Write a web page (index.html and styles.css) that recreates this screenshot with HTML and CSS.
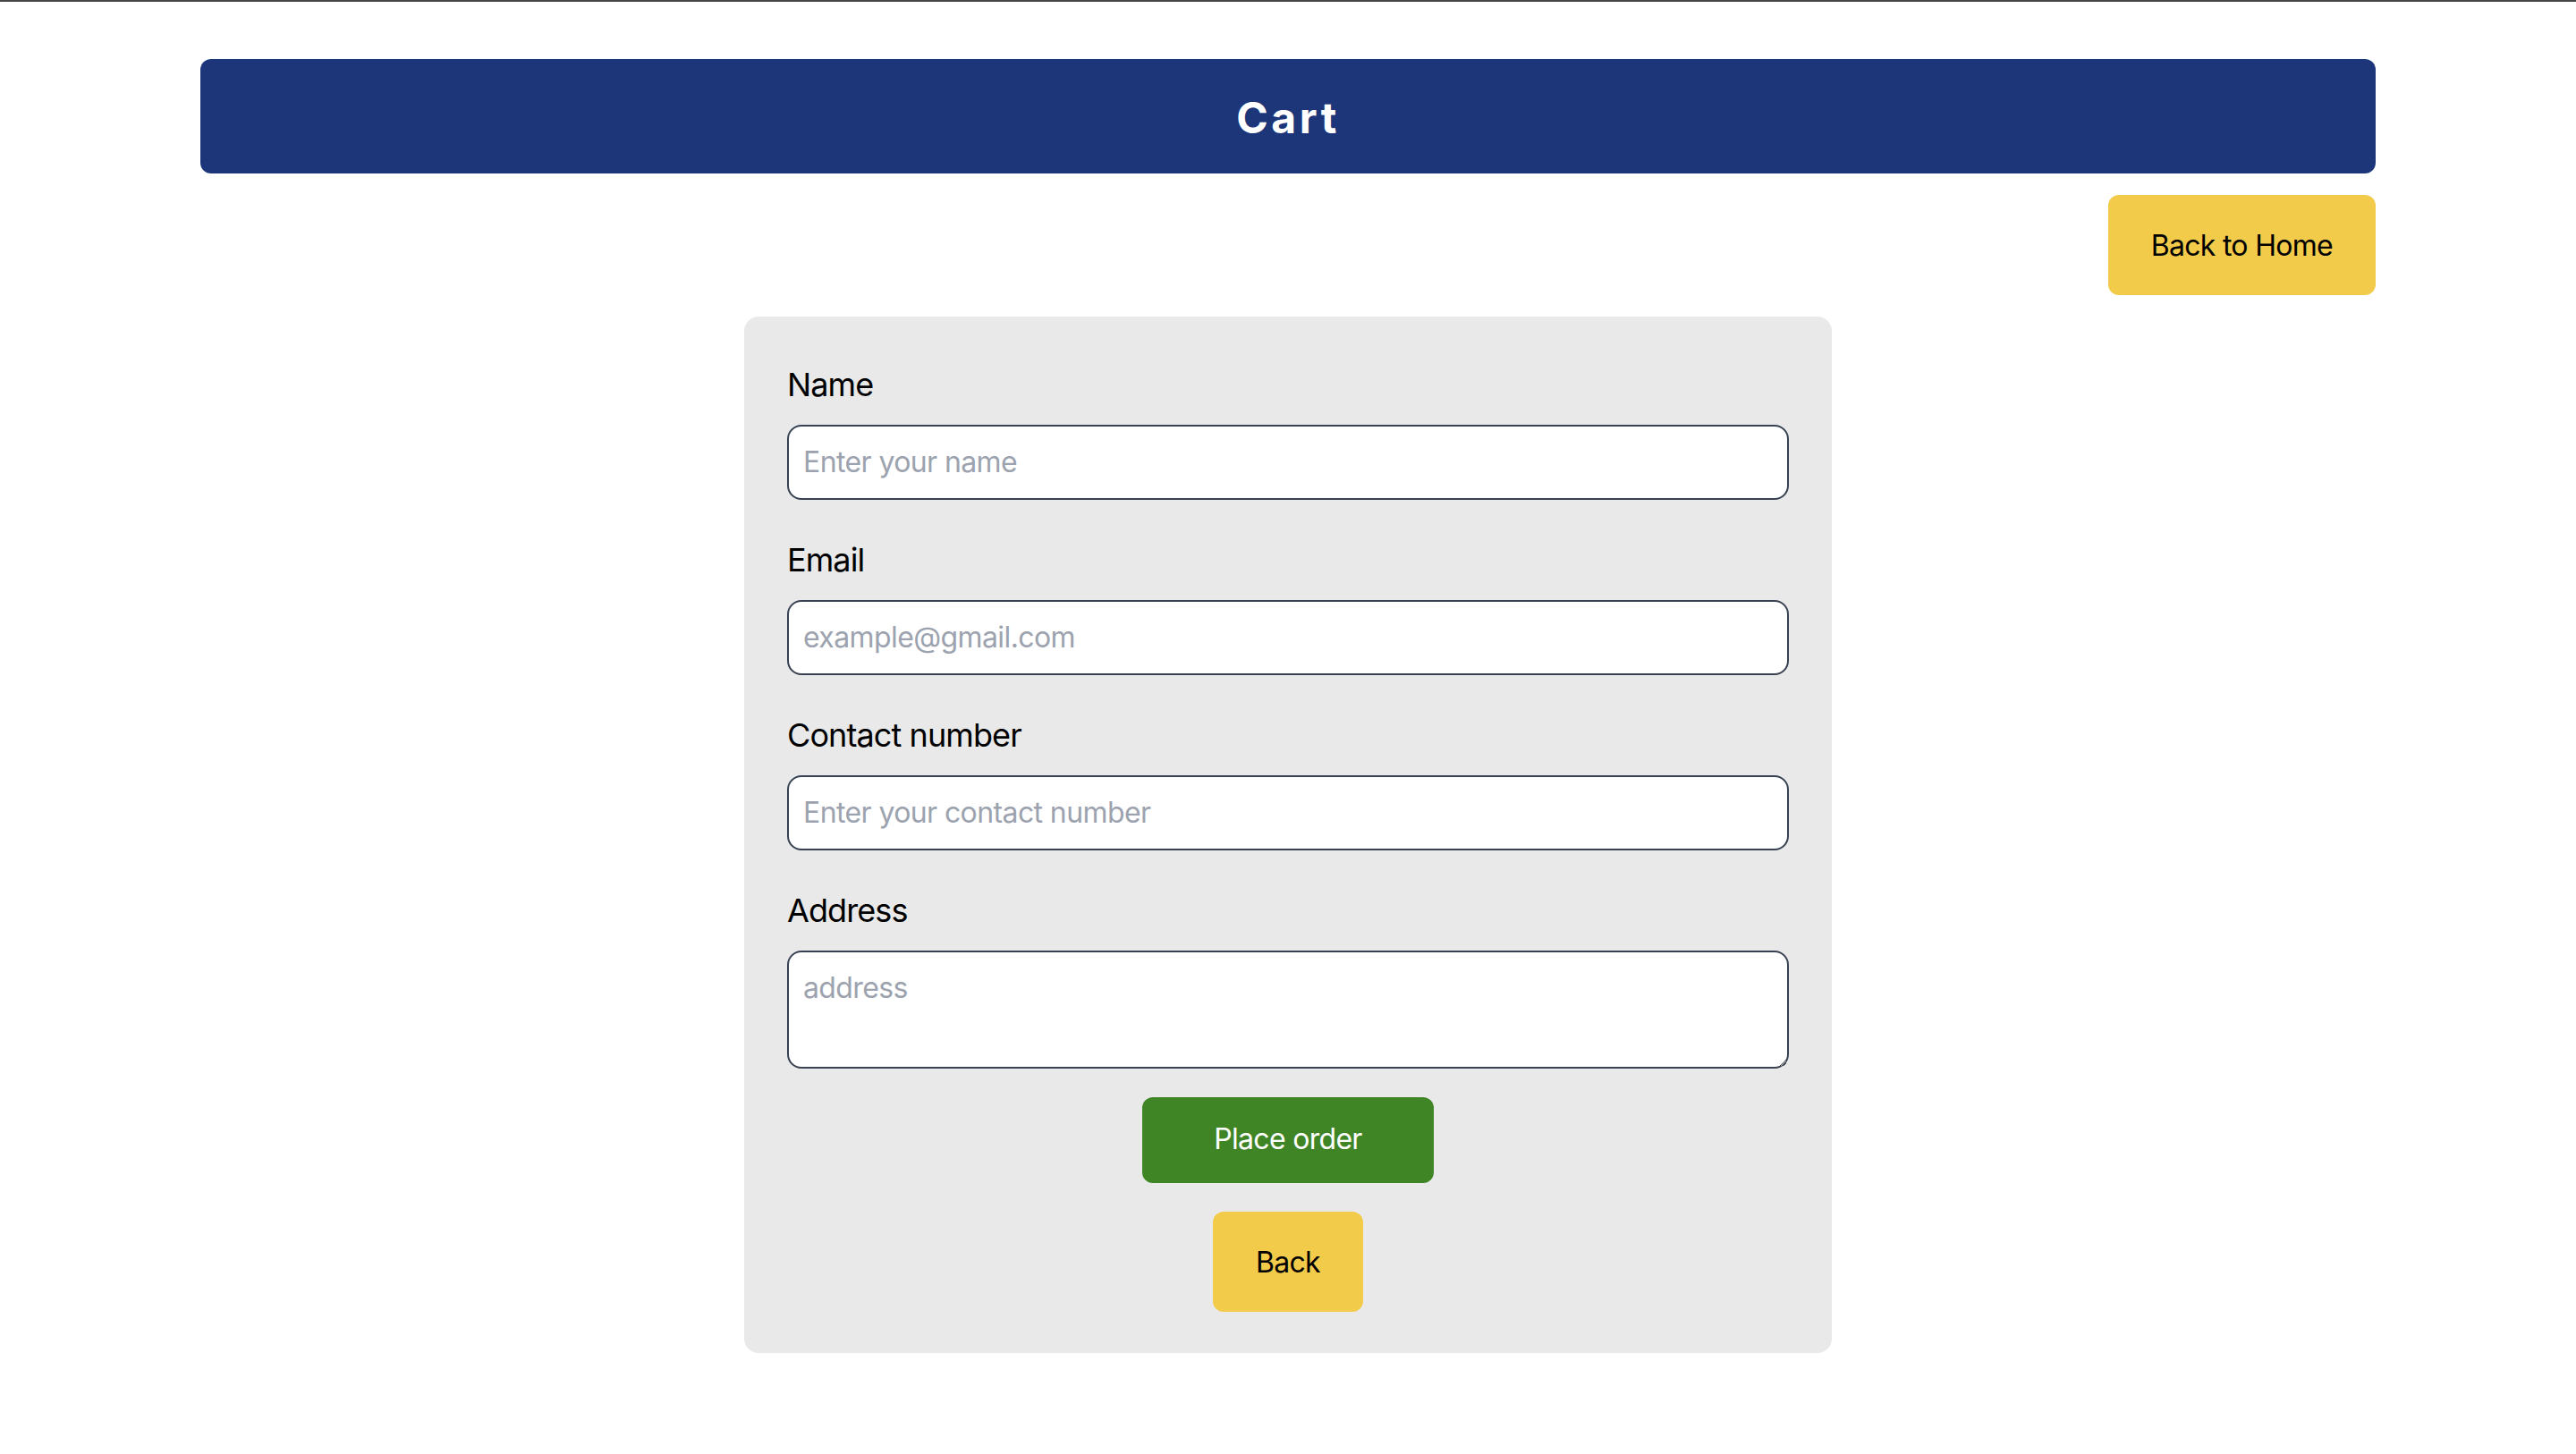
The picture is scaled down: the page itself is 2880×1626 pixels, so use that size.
FILE: index.html
```html
<!DOCTYPE html>
<html lang="en">
<head>
<meta charset="utf-8">
<title>Cart</title>
<link rel="stylesheet" href="styles.css">
</head>
<body>
<div class="topline"></div>
<main class="page">
  <header class="title-bar"><h1>Cart</h1></header>
  <div class="actions"><button class="btn btn-yellow" type="button">Back to Home</button></div>
  <form class="panel">
    <div class="field">
      <label class="label" for="name">Name</label>
      <input class="input" id="name" type="text" placeholder="Enter your name">
    </div>
    <div class="field">
      <label class="label" for="email">Email</label>
      <input class="input" id="email" type="email" placeholder="example@gmail.com">
    </div>
    <div class="field">
      <label class="label" for="contact">Contact number</label>
      <input class="input" id="contact" type="text" placeholder="Enter your contact number">
    </div>
    <div class="field field-last">
      <label class="label" for="address">Address</label>
      <textarea class="input textarea" id="address" rows="2" placeholder="address"></textarea>
    </div>
    <div class="form-buttons">
      <button class="btn btn-green" type="button">Place order</button>
      <button class="btn btn-yellow" type="button">Back</button>
    </div>
  </form>
</main>
</body>
</html>
```
FILE: styles.css
```css
* { box-sizing: border-box; }
html, body { margin: 0; padding: 0; background: #ffffff; }
body { font-family: Inter, "Liberation Sans", sans-serif; color: #000; }

.topline { height: 2px; background: #454545; }

.page {
  width: 2432px;
  margin: 64px auto 0;
}

.title-bar {
  height: 128px;
  padding-top: 3px;
  background: #1c3679;
  border-radius: 12px;
  display: flex;
  align-items: center;
  justify-content: center;
}
.title-bar h1 {
  margin: 0;
  color: #ffffff;
  font-size: 48px;
  font-weight: 700;
  letter-spacing: 3.5px;
  line-height: 1;
}

.actions {
  display: flex;
  justify-content: flex-end;
  margin-top: 24px;
}

.btn {
  font-family: Inter, "Liberation Sans", sans-serif;
  font-size: 32px;
  line-height: 48px;
  letter-spacing: -0.7px;
  border: none;
  border-radius: 12px;
  cursor: pointer;
}
.btn-yellow {
  background: #f2cb4a;
  color: #000;
  padding: 33px 48px 31px;
}
.btn-green {
  background: #3f8526;
  color: #fff;
  padding: 23px 80px 25px;
}

.panel {
  width: 1216px;
  margin: 24px auto 0;
  padding: 48px 48px 46px;
  background: #e9e9e9;
  border-radius: 16px;
  display: flex;
  flex-direction: column;
}

.field {
  display: flex;
  flex-direction: column;
  margin-bottom: 39px;
}
.field-last { margin-bottom: 32px; }

.label {
  font-size: 36px;
  line-height: 56px;
  letter-spacing: -0.9px;
  margin-bottom: 17px;
}

.input {
  width: 100%;
  font-family: Inter, "Liberation Sans", sans-serif;
  font-size: 32px;
  line-height: 48px;
  letter-spacing: -0.6px;
  padding: 16px;
  border: 2px solid #374151;
  border-radius: 16px;
  background: #fff;
  color: #000;
  outline: none;
}
.input::placeholder { color: #9ca3af; }
.textarea {
  display: block;
  height: 132px;
  resize: both;
}

.form-buttons {
  display: flex;
  flex-direction: column;
  align-items: center;
  gap: 32px;
}
```
